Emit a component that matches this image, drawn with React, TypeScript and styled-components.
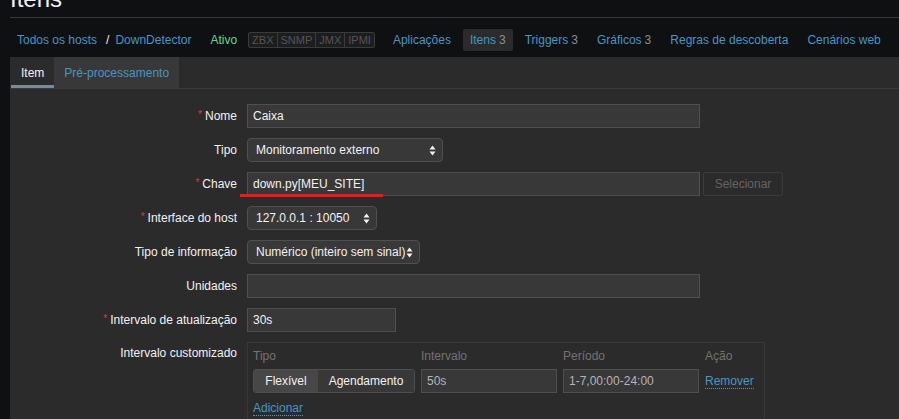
import React from "react";
import styled, { createGlobalStyle, css } from "styled-components";

const GlobalStyle = createGlobalStyle`
  html, body {
    margin: 0;
    padding: 0;
    background: #0e1012;
    color: #f2f2f2;
    font-family: "Liberation Sans", Arial, sans-serif;
    font-size: 12px;
    overflow: hidden;
  }
  * { box-sizing: border-box; }
`;

const Page = styled.div`
  width: 899px;
  height: 419px;
  overflow: hidden;
  display: flex;
  flex-direction: column;
`;

const Header = styled.header`
  margin-left: 10px;
  height: 18px;
  border-bottom: 1px solid #383838;
  flex: none;
`;

const Title = styled.h1`
  margin: -15px 0 0 0;
  font-size: 24px;
  line-height: 28px;
  font-weight: normal;
  color: #f2f2f2;
`;

const Nav = styled.nav`
  margin-top: 11px;
  height: 22px;
  display: flex;
  align-items: center;
  gap: 5px;
  padding-left: 10px;
  flex: none;
`;

const NavItem = styled.a<{ $active?: boolean }>`
  display: flex;
  align-items: center;
  height: 22px;
  padding: 0 7px;
  color: #4796c4;
  text-decoration: none;
  border-radius: 2px;
  white-space: nowrap;
  ${(p) =>
    p.$active &&
    css`
      background: #2b2b2b;
    `}
`;

const Count = styled.span`
  color: #8c8c8c;
  margin-left: 3px;
`;

const Breadcrumb = styled.div`
  display: flex;
  align-items: center;
  padding: 0 7px;
  white-space: nowrap;
`;

const Crumb = styled.a`
  color: #4796c4;
  text-decoration: none;
`;

const Sep = styled.span`
  color: #f2f2f2;
  margin: 0 6px 0 9px;
`;

const Status = styled.span`
  color: #59db8f;
  padding: 0 7px;
  margin-right: -1px;
`;

const Availability = styled.div`
  display: flex;
  height: 16px;
  border: 1px solid #3a3a3a;
  border-radius: 2px;
  background: #1c1d1f;
  margin-right: 6px;
`;

const AvailItem = styled.span`
  display: flex;
  align-items: center;
  padding: 0 3px;
  font-size: 11px;
  color: #555;
  & + & {
    border-left: 1px solid #3a3a3a;
  }
`;

const Panel = styled.section`
  margin-top: 6px;
  margin-left: 10px;
  background: #2b2b2b;
  flex: 1;
  display: flex;
  flex-direction: column;
`;

const TabBar = styled.div`
  display: flex;
  height: 32px;
  padding-left: 1px;
  border-bottom: 1px solid #383838;
  flex: none;
`;

const Tab = styled.a<{ $active?: boolean }>`
  display: flex;
  align-items: center;
  padding: 0 10px;
  height: 31px;
  text-decoration: none;
  color: ${(p) => (p.$active ? "#f2f2f2" : "#4796c4")};
  background: ${(p) => (p.$active ? "#2b2b2b" : "#383838")};
  box-shadow: ${(p) => (p.$active ? "inset 0 -3px 0 #768d99" : "none")};
`;

const Form = styled.div`
  display: grid;
  grid-template-columns: 227px 1fr;
  column-gap: 10px;
  row-gap: 10px;
  align-items: center;
  padding-top: 15px;
`;

const Label = styled.label<{ $top?: boolean }>`
  display: block;
  height: 24px;
  text-align: right;
  color: #f2f2f2;
  white-space: nowrap;
  line-height: 24px;
  ${(p) =>
    p.$top &&
    css`
      align-self: start;
      margin-top: -1px;
    `}
`;

const Req = styled.span`
  position: relative;
  top: -2px;
  color: #e33734;
  font-size: 10px;
  line-height: 0;
  margin-right: 3px;
`;

const Control = styled.div`
  position: relative;
  display: flex;
  align-items: center;
  gap: 3px;
`;

const Input = styled.div<{ $w: number; $muted?: boolean }>`
  width: ${(p) => p.$w}px;
  height: 24px;
  display: flex;
  align-items: center;
  padding: 0 5px;
  background: #383838;
  border: 1px solid #4f4f4f;
  color: ${(p) => (p.$muted ? "#b5b5b5" : "#f2f2f2")};
  white-space: nowrap;
`;

const Select = styled.div<{ $w: number }>`
  width: ${(p) => p.$w}px;
  height: 24px;
  display: flex;
  align-items: center;
  justify-content: space-between;
  padding: 0 6px 0 8px;
  background: #383838;
  border: 1px solid #4f4f4f;
  border-radius: 4px;
  color: #f2f2f2;
  white-space: nowrap;
`;

const Button = styled.button`
  height: 24px;
  width: 80px;
  background: transparent;
  border: 1px solid #3b3b3b;
  border-radius: 2px;
  color: #646464;
  font-family: inherit;
  font-size: 12px;
  padding: 0;
`;

const Highlight = styled.div`
  position: absolute;
  left: -7px;
  top: 22px;
  width: 143px;
  height: 3px;
  background: #f21818;
`;

const IntervalBox = styled.div`
  width: 518px;
  border: 1px solid #383838;
  border-bottom: none;
  padding: 4px 5px 10px;
  display: grid;
  grid-template-columns: 162px 136px 136px auto;
  column-gap: 6px;
  row-gap: 4px;
  align-items: center;
`;

const ColHead = styled.div`
  color: #737373;
  line-height: 18px;
`;

const Segmented = styled.div`
  display: flex;
  height: 24px;
  border: 1px solid #4f4f4f;
  border-radius: 3px;
  overflow: hidden;
`;

const Segment = styled.span<{ $on?: boolean }>`
  display: flex;
  align-items: center;
  justify-content: center;
  flex: ${(p) => (p.$on ? "0 0 64px" : "1")};
  background: ${(p) => (p.$on ? "#474747" : "#383838")};
  color: #f2f2f2;
`;

const DottedLink = styled.a`
  color: #4796c4;
  text-decoration: none;
  border-bottom: 1px dotted #4796c4;
  line-height: 14px;
  justify-self: start;
`;

const AddRow = styled.div`
  grid-column: 1 / -1;
  margin-top: 4px;
`;

const Arrows = () => (
  <svg width="7" height="11" viewBox="0 0 7 11">
    <path d="M3.5 0.5 L6.5 4.5 L0.5 4.5 Z" fill="#f2f2f2" />
    <path d="M3.5 10.5 L6.5 6.5 L0.5 6.5 Z" fill="#f2f2f2" />
  </svg>
);

const navLinks = [
  { label: "Aplicações" },
  { label: "Itens", count: 3, active: true },
  { label: "Triggers", count: 3 },
  { label: "Gráficos", count: 3 },
  { label: "Regras de descoberta" },
  { label: "Cenários web" },
];

export default function App() {
  return (
    <>
      <GlobalStyle />
      <Page>
        <Header>
          <Title>Itens</Title>
        </Header>
        <Nav>
          <Breadcrumb>
            <Crumb>Todos os hosts</Crumb>
            <Sep>/</Sep>
            <Crumb>DownDetector</Crumb>
          </Breadcrumb>
          <Status>Ativo</Status>
          <Availability>
            {["ZBX", "SNMP", "JMX", "IPMI"].map((a) => (
              <AvailItem key={a}>{a}</AvailItem>
            ))}
          </Availability>
          {navLinks.map((n) => (
            <NavItem key={n.label} $active={n.active}>
              {n.label}
              {n.count !== undefined && <Count>{n.count}</Count>}
            </NavItem>
          ))}
        </Nav>
        <Panel>
          <TabBar>
            <Tab $active>Item</Tab>
            <Tab>Pré-processamento</Tab>
          </TabBar>
          <Form>
            <Label>
              <Req>*</Req>Nome
            </Label>
            <Control>
              <Input $w={453}>Caixa</Input>
            </Control>

            <Label>Tipo</Label>
            <Control>
              <Select $w={196}>
                Monitoramento externo <Arrows />
              </Select>
            </Control>

            <Label>
              <Req>*</Req>Chave
            </Label>
            <Control>
              <Input $w={453}>down.py[MEU_SITE]</Input>
              <Button>Selecionar</Button>
              <Highlight />
            </Control>

            <Label>
              <Req>*</Req>Interface do host
            </Label>
            <Control>
              <Select $w={130}>
                127.0.0.1 : 10050 <Arrows />
              </Select>
            </Control>

            <Label>Tipo de informação</Label>
            <Control>
              <Select $w={173}>
                Numérico (inteiro sem sinal) <Arrows />
              </Select>
            </Control>

            <Label>Unidades</Label>
            <Control>
              <Input $w={453} />
            </Control>

            <Label>
              <Req>*</Req>Intervalo de atualização
            </Label>
            <Control>
              <Input $w={149}>30s</Input>
            </Control>

            <Label $top>Intervalo customizado</Label>
            <Control>
              <IntervalBox>
                <ColHead>Tipo</ColHead>
                <ColHead>Intervalo</ColHead>
                <ColHead>Período</ColHead>
                <ColHead>Ação</ColHead>
                <Segmented>
                  <Segment $on>Flexível</Segment>
                  <Segment>Agendamento</Segment>
                </Segmented>
                <Input $w={136} $muted>
                  50s
                </Input>
                <Input $w={136} $muted>
                  1-7,00:00-24:00
                </Input>
                <DottedLink>Remover</DottedLink>
                <AddRow>
                  <DottedLink>Adicionar</DottedLink>
                </AddRow>
              </IntervalBox>
            </Control>
          </Form>
        </Panel>
      </Page>
    </>
  );
}
